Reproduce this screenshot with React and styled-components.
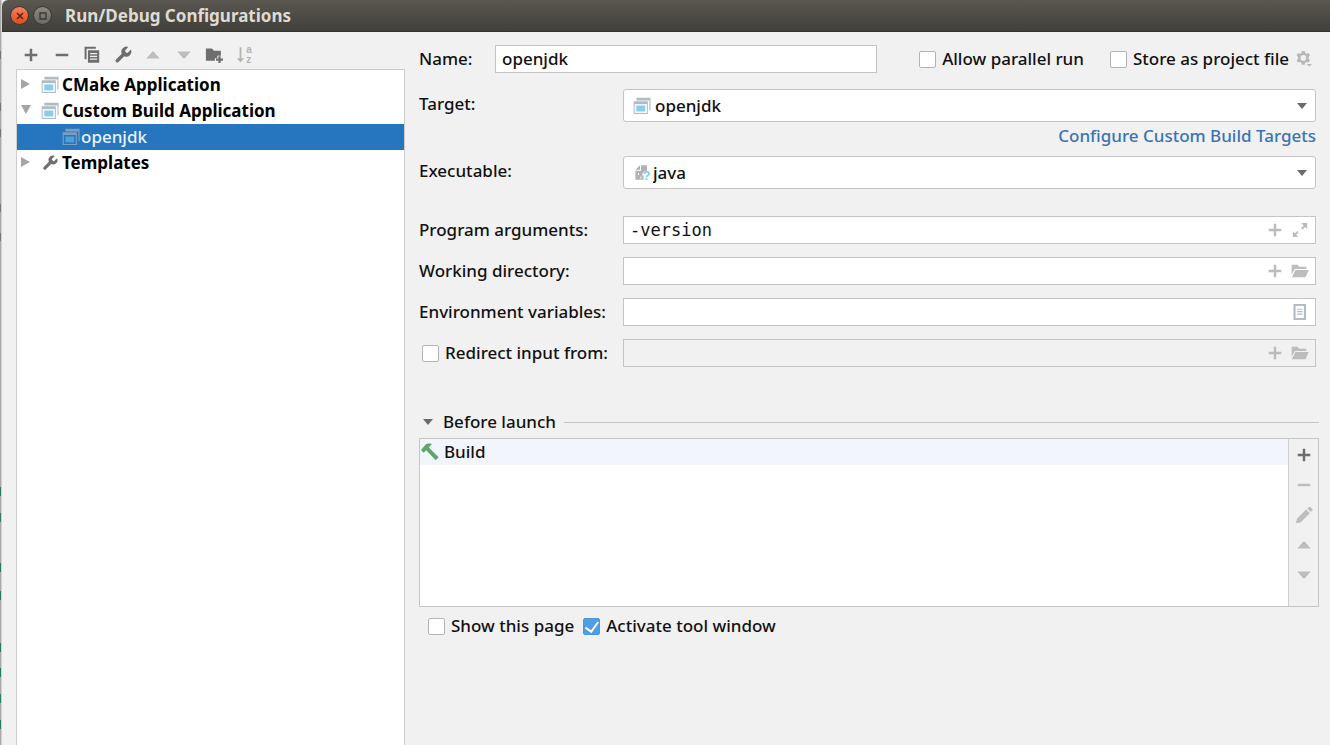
import { useState } from 'react';
import styled, { createGlobalStyle, css } from 'styled-components';

const GlobalStyle = createGlobalStyle`
  * {
    box-sizing: border-box;
  }
  body {
    margin: 0;
    background: #f1f1f1;
    color: #111;
    font: 500 17px/24px 'Noto Sans', 'Open Sans', sans-serif;
  }
  button, input, select {
    font: inherit;
    color: inherit;
  }
`;

// editor lines peeking out behind the window: [top, height, color]
const gutterMarks = [
  [51, 8, '#777'],
  [103, 8, '#777'],
  [129, 8, '#777'],
  [204, 8, '#777'],
  [233, 8, '#777'],
  [487, 9, '#2c7a63'],
  [513, 9, '#2c7a63'],
  [563, 9, '#2c7a63'],
  [591, 9, '#2c7a63'],
  [643, 9, '#2c7a63'],
  [668, 9, '#2c7a63'],
  [694, 9, '#2c7a63'],
  [720, 9, '#2c7a63'],
];

// icons
const Svg = styled.svg`
  flex: none;
  overflow: visible;
`;

const Icon = ({ size = 18, color = '#6e6e6e', children }) => (
  <Svg width={size} height={size} viewBox='0 0 16 16' fill={color} aria-hidden='true'>
    {children}
  </Svg>
);

const PlusIcon = ({ color }) => (
  <Icon color={color}>
    <path d='M6.9 2.4h2.2v4.5h4.5v2.2H9.1v4.5H6.9V9.1H2.4V6.9h4.5z' />
  </Icon>
);

const MinusIcon = ({ color }) => (
  <Icon color={color}>
    <path d='M2.4 6.9h11.2v2.2H2.4z' />
  </Icon>
);

const CopyIcon = () => (
  <Icon>
    <path d='M1.4.6h10v1.9H3.2v9.3H1.4z' />
    <path
      fillRule='evenodd'
      d='M4.4 3.7h10v11.2h-10zM6.3 6.2v1.1h6.2V6.2zM6.3 8.7v1.1h6.2V8.7zM6.3 11.2v1.1h6.2v-1.1z'
    />
  </Icon>
);

const WrenchIcon = ({ size = 20 }) => (
  <Svg width={size} height={size} viewBox='0 0 24 24' fill='#6e6e6e' aria-hidden='true'>
    <path d='M14.7 6.3a1 1 0 0 0 0 1.4l1.6 1.6a1 1 0 0 0 1.4 0l3.77-3.77a6 6 0 0 1-7.94 7.94l-6.91 6.91a2.12 2.12 0 0 1-3-3l6.91-6.91a6 6 0 0 1 7.94-7.94l-3.76 3.76z' />
  </Svg>
);

const UpIcon = () => (
  <Icon color='#bdbdbd'>
    <path d='M2 11.2h12L8 4.4z' />
  </Icon>
);

const DownIcon = () => (
  <Icon color='#bdbdbd'>
    <path d='M2 4.8h12L8 11.6z' />
  </Icon>
);

const NewFolderIcon = () => (
  <Icon>
    <path d='M.8 2.2h5.4l1.7 2h6.2v4.4h-3.2v2.2H8.8v2.4h-8z' />
    <path d='M11.9 9h2v2.1H16v1.9h-2.1v2.2h-2V13H9.8v-1.9h2.1z' />
  </Icon>
);

const SortIcon = () => (
  <Icon color='#b4b4b4'>
    <path d='M3.2 1.2h1.6v9.6h2.4l-3.2 3.8L.8 10.8h2.4z' />
    <text x='9' y='6' fontSize='9' fontWeight='700' fontFamily='Liberation Sans'>
      a
    </text>
    <text x='9.2' y='15.4' fontSize='9' fontWeight='700' fontFamily='Liberation Sans'>
      z
    </text>
  </Icon>
);

const AppIcon = ({ selected }) => (
  <Icon color={selected ? '#7ba0be' : '#b2bbc2'}>
    <path d='M3 .6h12.6v11.2h-1V3H3z' />
    <path
      fillRule='evenodd'
      d='M.6 3.8h12.6v11.4H.6zM1.6 6.2v8h10.6v-8z'
    />
    {!selected && <path fill='#eef8fc' d='M1.6 6.2h10.6v8H1.6z' />}
    <path fill={selected ? '#4ea3d3' : '#8accea'} d='M3 7.6h7.8v5.2H3z' />
  </Icon>
);

const BinaryIcon = () => (
  <Icon size={16} color='#b0b3b6'>
    <path d='M7 .2v4.6H2.4zM8 .2h6v5.6c-2.8 0-4.8 1.6-4.8 4.6h1.4v4.4H2.4v-9H8z' />
    <path fill='#fff' d='M5 8h1v2H5zM7.4 11.4h1v2h-1z' />
    <text x='9.4' y='15' fontSize='13' fontWeight='700' fontFamily='Liberation Sans' fill='#7ccaee'>
      ?
    </text>
  </Icon>
);

const GearIcon = () => (
  <Icon color='#b8b8b8'>
    <path
      fillRule='evenodd'
      d='M6.1.8h2.6l.4 1.8 1.2.7 1.8-.6 1.3 2.2-1.3 1.3v1.5l1.3 1.3-1.3 2.2-1.8-.6-1.2.7-.4 1.8H6.1l-.4-1.8-1.2-.7-1.8.6L1.4 9l1.3-1.3V6.2L1.4 4.9l1.3-2.2 1.8.6 1.2-.7zM7.4 4.5a2.5 2.5 0 1 0 0 5 2.5 2.5 0 0 0 0-5z'
    />
    <path d='M10.4 12.4H15l-2.3 2.5z' />
  </Icon>
);

const ExpandIcon = () => (
  <Icon color='#bcbcbc'>
    <path d='M9 1.8h5.4v5.4l-1.9-1.9-2.4 2.4-1.2-1.2 2.3-2.4zM1.6 9l1.9 1.9 2.1-2.1L6.8 10l-2.2 2.2 2 2h-5z' />
  </Icon>
);

const OpenFolderIcon = () => (
  <Icon color='#bdbdbd'>
    <path d='M.6 2.4h5.2l1.5 1.8h6.4v2H3.4L.6 11z' />
    <path d='M4 7.2h11.8l-2.9 6.4H.7z' />
  </Icon>
);

const ListIcon = () => (
  <Icon color='#b3bcc4'>
    <path fillRule='evenodd' d='M2.2.8h11.2v14.4H2.2zM4.1 2.7v10.6h7.4V2.7z' />
    <path d='M5.4 5h4.8v1H5.4zM5.4 7.2h4.8v1H5.4zM5.4 9.4h4.8v1H5.4z' />
  </Icon>
);

const PencilIcon = () => (
  <Icon color='#bdbdbd'>
    <path d='M9.9 3.2l3.2 3.2-8.2 8.2-4 .7.8-4zM10.9 2.3l1.3-1.2a1.2 1.2 0 0 1 1.7 0l1.3 1.3a1.2 1.2 0 0 1 0 1.7L14 5.4z' />
  </Icon>
);

const HammerIcon = () => (
  <Icon color='#59a869'>
    <path d='M0 6.2L4.2 1.4C5.6.2 7.9.3 9.7.8L6.9 4l8.8 8.7-2.6 2.6-8.5-8.9-2.2 2.2z' />
  </Icon>
);

const Chevron = ({ open }) => (
  <Svg width='10' height='14' viewBox='0 0 10 14' fill='#a5a5a5' aria-hidden='true'>
    <path d={open ? 'M0 1h10L5 10z' : 'M0 1l9 5-9 5z'} />
  </Svg>
);

const Caret = () => (
  <Svg width='10' height='6' viewBox='0 0 10 6' fill='#6b6b6b' aria-hidden='true'>
    <path d='M0 0h10L5 6z' />
  </Svg>
);

// small building blocks
const Check = ({ label, defaultChecked }) => (
  <CheckLabel>
    <CheckBox type='checkbox' defaultChecked={defaultChecked} />
    {label}
  </CheckLabel>
);

const Combo = ({ id, icon, value }) => (
  <Field $tall>
    {icon}
    <ComboSelect id={id} defaultValue={value}>
      <option>{value}</option>
    </ComboSelect>
    <Caret />
  </Field>
);

const TextRow = ({ id, label, defaultValue, actions }) => (
  <>
    <Label htmlFor={id}>{label}</Label>
    <Field>
      <TextInput id={id} $mono defaultValue={defaultValue} />
      {actions}
    </Field>
  </>
);

const AddMacro = () => (
  <IconButton type='button' aria-label='Insert macro'>
    <PlusIcon color='#bcbcbc' />
  </IconButton>
);

const toolbar = [
  ['Add', <PlusIcon />],
  ['Remove', <MinusIcon />],
  ['Copy', <CopyIcon />],
  ['Edit templates', <WrenchIcon />],
  ['Move up', <UpIcon />],
  ['Move down', <DownIcon />],
  ['New folder', <NewFolderIcon />],
  ['Sort', <SortIcon />],
];

const taskButtons = [
  ['Add task', <PlusIcon />],
  ['Remove task', <MinusIcon color='#bdbdbd' />],
  ['Edit task', <PencilIcon />],
  ['Move task up', <UpIcon />],
  ['Move task down', <DownIcon />],
];

const App = () => {
  const [name, setName] = useState('openjdk');

  return (
    <Desktop>
      <GlobalStyle />
      <Gutter />
      <Dialog>
        <TitleBar>
          <WindowButton type='button' aria-label='Close' $close>
            <svg width='8' height='8' viewBox='0 0 8 8' stroke='#5c2413' strokeWidth='1.6'>
              <path d='M1 1l6 6M7 1L1 7' />
            </svg>
          </WindowButton>
          <WindowButton type='button' aria-label='Maximize'>
            <svg width='8' height='8' viewBox='0 0 8 8' stroke='#3a3935' fill='none' strokeWidth='1.4'>
              <path d='M1 1h6v6H1z' />
            </svg>
          </WindowButton>
          <h1>Run/Debug Configurations</h1>
        </TitleBar>
        <Content>
          <Sidebar>
            <Toolbar>
              {toolbar.map(([label, icon]) => (
                <IconButton type='button' key={label} aria-label={label} $wide>
                  {icon}
                </IconButton>
              ))}
            </Toolbar>
            <Tree>
              <TreeRow>
                <Chevron />
                <AppIcon />
                CMake Application
              </TreeRow>
              <TreeRow>
                <Chevron open />
                <AppIcon />
                Custom Build Application
              </TreeRow>
              <TreeRow $selected>
                <AppIcon selected />
                {name}
              </TreeRow>
              <TreeRow>
                <Chevron />
                <WrenchIcon size={18} />
                Templates
              </TreeRow>
            </Tree>
          </Sidebar>
          <Main>
            <NameRow>
              <label htmlFor='name'>Name:</label>
              <Field>
                <TextInput id='name' value={name} onChange={(e) => setName(e.target.value)} />
              </Field>
              <NameOptions>
                <Check label='Allow parallel run' />
                <StoreOption>
                  <Check label='Store as project file' />
                  <IconButton type='button' aria-label='Storage options'>
                    <GearIcon />
                  </IconButton>
                </StoreOption>
              </NameOptions>
            </NameRow>
            <ComboGrid>
              <Label htmlFor='target'>Target:</Label>
              <Combo id='target' icon={<AppIcon />} value='openjdk' />
              <ConfigLink href='#targets'>Configure Custom Build Targets</ConfigLink>
              <Label htmlFor='executable'>Executable:</Label>
              <Combo id='executable' icon={<BinaryIcon />} value='java' />
            </ComboGrid>
            <FieldGrid>
              <TextRow
                id='args'
                label='Program arguments:'
                defaultValue='-version'
                actions={
                  <>
                    <AddMacro />
                    <IconButton type='button' aria-label='Expand'>
                      <ExpandIcon />
                    </IconButton>
                  </>
                }
              />
              <TextRow
                id='dir'
                label='Working directory:'
                actions={
                  <>
                    <AddMacro />
                    <IconButton type='button' aria-label='Browse'>
                      <OpenFolderIcon />
                    </IconButton>
                  </>
                }
              />
              <TextRow
                id='env'
                label='Environment variables:'
                actions={
                  <IconButton type='button' aria-label='Edit variables'>
                    <ListIcon />
                  </IconButton>
                }
              />
              <RedirectOption>
                <Check label='Redirect input from:' />
              </RedirectOption>
              <Field $disabled>
                <TextInput aria-label='Redirect input file' disabled />
                <AddMacro />
                <IconButton type='button' aria-label='Browse input file' disabled>
                  <OpenFolderIcon />
                </IconButton>
              </Field>
            </FieldGrid>
            <SectionHead>
              <SectionToggle type='button'>
                <Caret />
                Before launch
              </SectionToggle>
              <hr />
            </SectionHead>
            <TaskPanel>
              <TaskList>
                <li>
                  <HammerIcon />
                  Build
                </li>
              </TaskList>
              <TaskTools>
                {taskButtons.map(([label, icon]) => (
                  <IconButton type='button' key={label} aria-label={label}>
                    {icon}
                  </IconButton>
                ))}
              </TaskTools>
            </TaskPanel>
            <LaunchOptions>
              <Check label='Show this page' />
              <Check label='Activate tool window' defaultChecked />
            </LaunchOptions>
          </Main>
        </Content>
      </Dialog>
    </Desktop>
  );
};

const Desktop = styled.div`
  display: flex;
  min-height: 100vh;
`;

const Gutter = styled.div`
  flex: 0 0 2px;
  background: ${gutterMarks
    .map(([top, h, c]) => `linear-gradient(${c}, ${c}) 0 ${top}px / 1px ${h}px no-repeat`)
    .join(', ')},
    linear-gradient(90deg, #a9a9a9 1px, #d0d0d0 1px);
`;

const Dialog = styled.div`
  flex: 1;
  min-width: 0;
  display: flex;
  flex-direction: column;
`;

const TitleBar = styled.header`
  display: flex;
  align-items: center;
  gap: 4px;
  height: 32px;
  padding: 0 8px;
  border-radius: 6px 0 0 0;
  border-bottom: 1px solid #33322e;
  background: linear-gradient(#5a5850, #403f3a);

  h1 {
    margin: 0 0 0 9px;
    font-size: 17px;
    line-height: 24px;
    font-weight: 700;
    color: #dfdbd2;
  }
`;

const WindowButton = styled.button`
  display: flex;
  align-items: center;
  justify-content: center;
  width: 19px;
  height: 19px;
  padding: 0;
  border: 1px solid #393833;
  border-radius: 50%;
  background: linear-gradient(#8b897f, #6b6a62);

  ${({ $close }) =>
    $close &&
    css`
      background: linear-gradient(#f4825a, #e4491c);
    `}
`;

const Content = styled.div`
  flex: 1;
  display: flex;
  gap: 14px;
  padding: 0 11px 0 14px;
`;

const Sidebar = styled.aside`
  flex: 0 0 389px;
  display: flex;
  flex-direction: column;
`;

const Toolbar = styled.div`
  display: flex;
  justify-content: space-between;
  align-items: center;
  width: 244px;
  height: 37px;
  padding-top: 9px;
`;

const IconButton = styled.button`
  display: flex;
  align-items: center;
  justify-content: center;
  flex: none;
  width: ${({ $wide }) => ($wide ? 30 : 20)}px;
  height: 24px;
  padding: 0;
  border: 0;
  background: none;
`;

const Tree = styled.ul`
  flex: 1;
  margin: 0;
  padding: 2px 0 0;
  list-style: none;
  background: #fff;
  border: 1px solid #cdcdcd;
  border-bottom: 0;
`;

const TreeRow = styled.li`
  display: flex;
  align-items: center;
  gap: 3px;
  height: 26px;
  padding-left: 4px;
  font-weight: 700;
  color: #000;

  svg:first-child {
    margin-right: 7px;
  }

  ${({ $selected }) =>
    $selected &&
    css`
      padding-left: 45px;
      font-weight: 500;
      color: #e9f3fc;
      background: #2675bf;

      svg:first-child {
        margin-right: -2px;
      }
    `}
`;

const Main = styled.main`
  flex: 1;
  min-width: 0;
  padding-top: 13px;
`;

const Field = styled.div`
  display: flex;
  align-items: center;
  gap: ${({ $tall }) => ($tall ? 4 : 5)}px;
  min-width: 0;
  height: ${({ $tall }) => ($tall ? 33 : 28)}px;
  padding: ${({ $tall }) => ($tall ? '0 8px 0 9px' : '0 5px 0 6px')};
  border: 1px solid #c4c4c4;
  border-radius: ${({ $tall }) => ($tall ? 3 : 0)}px;
  background: ${({ $disabled }) => ($disabled ? '#f1f1f1' : '#fff')};
`;

const TextInput = styled.input`
  flex: 1;
  min-width: 0;
  padding: 0;
  border: 0;
  outline: 0;
  background: none;
  ${({ $mono }) => $mono && "font-family: 'DejaVu Sans Mono', monospace;"}
`;

const ComboSelect = styled.select`
  flex: 1;
  min-width: 0;
  padding: 0;
  border: 0;
  outline: 0;
  appearance: none;
  background: none;
`;

const NameRow = styled.div`
  display: flex;
  align-items: center;
  padding-right: 5px;

  > label {
    flex: 0 0 76px;
  }
  > ${Field} {
    flex: 0 1 382px;
  }
`;

const NameOptions = styled.div`
  display: flex;
  align-items: center;
  gap: 26px;
  margin-left: auto;
`;

const StoreOption = styled.div`
  display: flex;
  align-items: center;
  gap: 5px;
`;

const CheckLabel = styled.label`
  display: flex;
  align-items: center;
  gap: 6px;
  white-space: nowrap;
`;

const CheckBox = styled.input`
  appearance: none;
  display: flex;
  justify-content: center;
  flex: none;
  width: 17px;
  height: 17px;
  margin: 0;
  border: 1px solid #b4b4b4;
  border-radius: 2px;
  background: #fff;

  &:checked {
    border-color: #4a97dc;
    background: #4f9ee3;
  }
  &:checked::after {
    content: '';
    width: 6px;
    height: 11px;
    border: solid #fff;
    border-width: 0 2px 2px 0;
    transform: rotate(36deg);
  }
`;

const FormGrid = styled.div`
  display: grid;
  grid-template-columns: 204px minmax(0, 1fr);
  padding-right: 3px;
`;

const ComboGrid = styled(FormGrid)`
  margin-top: 16px;
`;

const FieldGrid = styled(FormGrid)`
  row-gap: 13px;
  align-items: center;
  margin-top: 27px;
`;

const Label = styled.label`
  padding-top: 3px;
  white-space: nowrap;

  ${FieldGrid} & {
    padding-top: 0;
  }
`;

const ConfigLink = styled.a`
  grid-column: 2;
  justify-self: end;
  margin: 2px 0 8px;
  color: #3874b4;
  text-decoration: none;
`;

const RedirectOption = styled.div`
  padding-left: 3px;
`;

const SectionHead = styled.div`
  display: flex;
  align-items: center;
  gap: 8px;
  margin-top: 43px;

  hr {
    flex: 1;
    margin: 0;
    border: 0;
    border-top: 1px solid #c6c6c6;
  }
`;

const SectionToggle = styled.button`
  display: flex;
  align-items: center;
  gap: 10px;
  padding: 0 0 0 4px;
  border: 0;
  background: none;
`;

const TaskPanel = styled.div`
  display: flex;
  height: 169px;
  margin-top: 4px;
  border: 1px solid #c6c6c6;
`;

const TaskList = styled.ul`
  flex: 1;
  margin: 0;
  padding: 0;
  list-style: none;
  background: #fff;

  li {
    display: flex;
    align-items: center;
    gap: 5px;
    height: 26px;
    padding-left: 1px;
    background: #f2f6fc;
  }
`;

const TaskTools = styled.div`
  display: flex;
  flex-direction: column;
  align-items: center;
  gap: 6px;
  width: 30px;
  padding-top: 4px;
  border-left: 1px solid #cfcfcf;
`;

const LaunchOptions = styled.div`
  display: flex;
  gap: 9px;
  padding: 7px 0 0 9px;
`;

export default App;
